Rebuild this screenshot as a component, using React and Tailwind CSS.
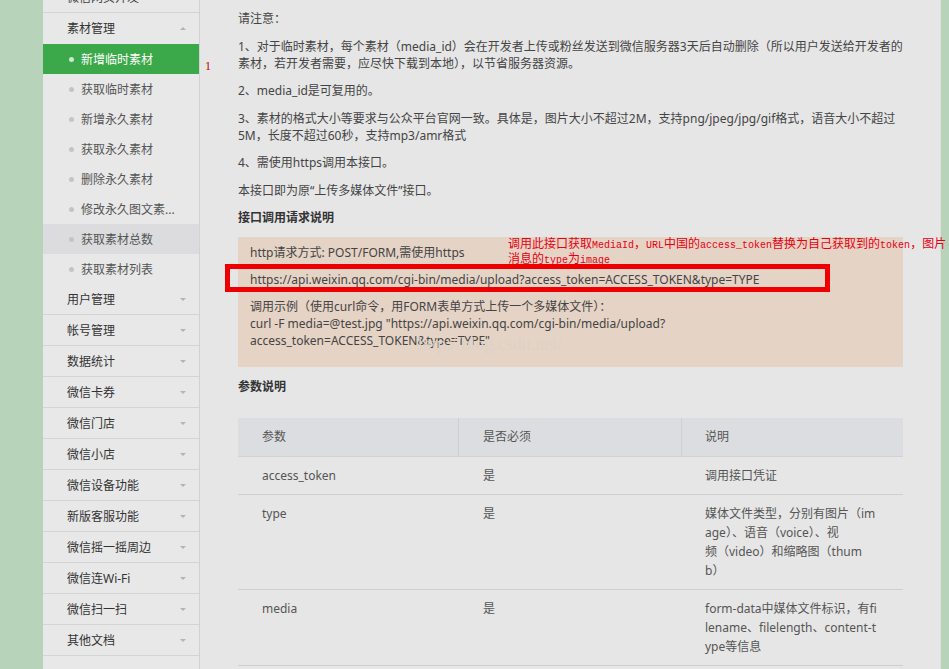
import React from 'react'

const font = { fontFamily: '"Noto Sans", "Noto Sans CJK SC", sans-serif' }

const subItems = [
  { label: '新增临时素材', state: 'active' },
  { label: '获取临时素材' },
  { label: '新增永久素材' },
  { label: '获取永久素材' },
  { label: '删除永久素材' },
  { label: '修改永久图文素...' },
  { label: '获取素材总数', state: 'hover' },
  { label: '获取素材列表' },
]

const groups = [
  '用户管理',
  '帐号管理',
  '数据统计',
  '微信卡券',
  '微信门店',
  '微信小店',
  '微信设备功能',
  '新版客服功能',
  '微信摇一摇周边',
  '微信连Wi-Fi',
  '微信扫一扫',
  '其他文档',
]

const Caret = ({ up = false }) => (
  <span
    className={`ml-auto mr-[13px] h-0 w-0 border-x-[3px] border-x-transparent ${
      up ? 'border-b-[3px] border-b-[#b4b4b4]' : 'border-t-[3px] border-t-[#b4b4b4]'
    }`}
  />
)

const Sidebar = () => (
  <aside className="w-[157px] shrink-0 border-r border-[#d2d2d2] bg-[#e8e8e8] text-[12px] text-[#333]">
    <div className="-mt-[18px] flex h-[31px] items-center border-b border-[#d4d4d4] pl-[24px] text-[#444]">
      微信网页开发
      <Caret />
    </div>
    <div className="flex h-[31px] items-center pl-[24px]">
      素材管理
      <Caret up />
    </div>
    {subItems.map((item) => (
      <div
        key={item.label}
        className={`flex h-[30px] items-center pl-[26px] ${
          item.state === 'active'
            ? 'bg-[#3ba84a] text-white'
            : item.state === 'hover'
              ? 'bg-[#dcdcdf] text-[#555]'
              : 'text-[#555]'
        }`}
      >
        <span
          className={`mr-[7px] h-[5px] w-[5px] rounded-full ${
            item.state === 'active' ? 'bg-[#cfe6cf]' : 'bg-[#c4c4c4]'
          }`}
        />
        {item.label}
      </div>
    ))}
    {groups.map((label) => (
      <div
        key={label}
        className="flex h-[31px] items-center border-b border-[#d4d4d4] pl-[24px]"
      >
        {label}
        <Caret />
      </div>
    ))}
  </aside>
)

const Mono = ({ children }) => (
  <span className="text-[10px]" style={{ fontFamily: '"Liberation Mono", monospace' }}>
    {children}
  </span>
)

const NoteBox = () => (
  <div className="relative bg-[#e5d3c5] pb-[17.5px] pl-[12px] pt-[7.5px] text-[#444]">
    <p className="mb-[10px]">http请求方式: POST/FORM,需使用https</p>
    <p className="mb-[10px] whitespace-nowrap">
      https://api.weixin.qq.com/cgi-bin/media/upload?access_token=ACCESS_TOKEN&amp;type=TYPE
    </p>
    <p>
      调用示例（使用curl命令，用FORM表单方式上传一个多媒体文件）：
      <br />
      curl -F media=@test.jpg "https://api.weixin.qq.com/cgi-bin/media/upload?
      <br />
      access_token=ACCESS_TOKEN&amp;type=TYPE"
    </p>

    {/* faint blog watermark */}
    <span
      className="pointer-events-none absolute left-[180px] top-[99px] text-[18px] text-[#ddd2c8]"
      style={{ fontFamily: '"Liberation Serif", serif' }}
    >
      http://blog.csdn.net/
    </span>

    {/* red highlight box */}
    <div className="pointer-events-none absolute left-[-13px] top-[27px] h-[28px] w-[605px] border-[5px] border-[#ee0000]" />

    {/* annotation */}
    <div
      className="pointer-events-none absolute left-[270px] top-[0px] whitespace-nowrap text-[12px] leading-[12px] text-[#e60012]"
      style={{ fontFamily: '"Noto Sans CJK SC", sans-serif' }}
    >
      <div>
        调用此接口获取<Mono>MediaId</Mono>，<Mono>URL</Mono>中国的<Mono>access_token</Mono>
        替换为自己获取到的<Mono>token</Mono>，图片
      </div>
      <div>
        消息的<Mono>type</Mono>为<Mono>image</Mono>
      </div>
    </div>
  </div>
)

const rows = [
  { name: 'access_token', req: '是', desc: ['调用接口凭证'] },
  {
    name: 'type',
    req: '是',
    desc: ['媒体文件类型，分别有图片（im', 'age）、语音（voice）、视', '频（video）和缩略图（thum', 'b）'],
  },
  {
    name: 'media',
    req: '是',
    desc: ['form-data中媒体文件标识，有fi', 'lename、filelength、content-t', 'ype等信息'],
  },
]

const ParamTable = () => (
  <div className="text-[#555]">
    <div className="flex h-[39px] items-center border-b border-[#d2d2d2] bg-[#dcdde0]">
      <div className="flex h-full w-[221px] items-center border-r border-[#d0d0d3] pl-[24px]">参数</div>
      <div className="flex h-full w-[223px] items-center border-r border-[#d0d0d3] pl-[24px]">是否必须</div>
      <div className="flex h-full flex-1 items-center pl-[23px]">说明</div>
    </div>
    {rows.map((row) => (
      <div key={row.name} className="flex border-b border-[#cfcfcf] py-[9px] leading-[19px]">
        <div className="w-[221px] pl-[24px]">{row.name}</div>
        <div className="w-[223px] pl-[24px]">{row.req}</div>
        <div className="flex-1 pl-[23px]">
          {row.desc.map((line) => (
            <div key={line} className="whitespace-nowrap">
              {line}
            </div>
          ))}
        </div>
      </div>
    ))}
  </div>
)

export default function App() {
  return (
    <div
      className="flex h-[669px] w-[949px] overflow-hidden bg-[#b7d3b9] text-[12px] leading-[17px]"
      style={font}
    >
      <div className="w-[43px] shrink-0" />
      <Sidebar />
      <main className="relative w-[741px] shrink-0 border-r border-[#e2dcdc] bg-[#e6e6e6] pl-[38px] pr-[37px] pt-[10px] text-[#444]">
        <span
          className="absolute left-[5px] top-[58px] text-[12px] text-[#c00000]"
          style={{ fontFamily: '"Liberation Serif", serif' }}
        >
          1
        </span>
        <p className="mb-[10.5px]">请注意：</p>
        <p className="mb-[10.5px]">
          <span className="whitespace-nowrap">
            1、对于临时素材，每个素材（media_id）会在开发者上传或粉丝发送到微信服务器3天后自动删除（所以用户发送给开发者的
          </span>
          <br />
          素材，若开发者需要，应尽快下载到本地），以节省服务器资源。
        </p>
        <p className="mb-[10.5px]">2、media_id是可复用的。</p>
        <p className="mb-[10.5px]">
          <span className="whitespace-nowrap">
            3、素材的格式大小等要求与公众平台官网一致。具体是，图片大小不超过2M，支持png/jpeg/jpg/gif格式，语音大小不超过
          </span>
          <br />
          5M，长度不超过60秒，支持mp3/amr格式
        </p>
        <p className="mb-[10.5px]">4、需使用https调用本接口。</p>
        <p className="mb-[10.5px]">本接口即为原“上传多媒体文件”接口。</p>
        <p className="mb-[10.5px] font-bold text-[#333]">接口调用请求说明</p>
        <NoteBox />
        <p className="mb-[22.5px] mt-[11.5px] font-bold text-[#333]">参数说明</p>
        <ParamTable />
      </main>
      <div className="flex-1" />
    </div>
  )
}
